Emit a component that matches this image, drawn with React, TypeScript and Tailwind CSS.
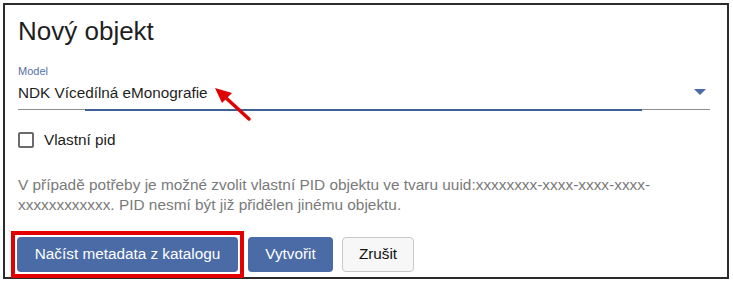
export default function App() {
  return (
    <div className="w-[733px] h-[285px] bg-white p-[3px] font-['Liberation_Sans',Arial,sans-serif] relative">
      <div className="w-[726px] h-[276px] border-2 border-[#2b2b2b] pl-[13px] pr-[17px] pt-[11px] flex flex-col">
        <h1 className="text-[26px] leading-[30px] text-[#1f1f1f]">Nový objekt</h1>

        <div className="mt-[19px]">
          <div className="text-[11px] leading-[13px] text-[#5570a8]">Model</div>
          <div className="relative flex items-center h-[22px] mt-[4px]">
            <span className="text-[15.3px] leading-[20px] text-[#1f1f1f]">NDK Vícedílná eMonografie</span>
            <span className="absolute right-[4px] top-[7px] w-0 h-0 border-l-[6px] border-r-[6px] border-t-[6px] border-l-transparent border-r-transparent border-t-[#4a6ba6]" />
          </div>
          <div className="relative h-[2px] mt-[5px]">
            <div className="absolute left-0 right-0 top-0 h-px bg-[#8f8f8f]" />
            <div className="absolute left-[67px] right-[68px] top-0 h-[2px] bg-[#3f5f95]" />
          </div>
        </div>

        <label className="flex items-center gap-[10px] mt-[19px]">
          <span className="w-[16px] h-[16px] border-2 border-[#6b6b6b] rounded-[2px]" />
          <span className="text-[15.3px] leading-[20px] text-[#222]">Vlastní pid</span>
        </label>

        <p className="mt-[25px] text-[15.4px] leading-[20px] text-[#7a7a7a]">
          V případě potřeby je možné zvolit vlastní PID objektu ve tvaru uuid:xxxxxxxx-xxxx-xxxx-xxxx-
          <br />
          xxxxxxxxxxxx. PID nesmí být již přidělen jinému objektu.
        </p>

        <div className="flex items-center gap-[9px] mt-[16px] -ml-[7px]">
          <div className="border-4 border-[#e30000] p-[2px] -mr-[5px]">
            <button className="h-[35px] w-[221px] rounded-[4px] bg-[#4a6ba6] text-white text-[15.3px]">
              Načíst metadata z katalogu
            </button>
          </div>
          <button className="h-[35px] w-[85px] rounded-[4px] bg-[#4a6ba6] text-white text-[15.3px]">
            Vytvořit
          </button>
          <button className="h-[35px] w-[72px] rounded-[4px] bg-[#f7f7f7] border border-[#c8c8c8] text-[#111] text-[15.3px]">
            Zrušit
          </button>
        </div>
      </div>

      <svg className="absolute left-0 top-0 pointer-events-none" width="733" height="285">
        <line x1="249" y1="119" x2="225" y2="97" stroke="#e00000" strokeWidth="3.5" strokeLinecap="round" />
        <polygon points="215,88 232,93 222,103" fill="#e00000" />
      </svg>
    </div>
  );
}
